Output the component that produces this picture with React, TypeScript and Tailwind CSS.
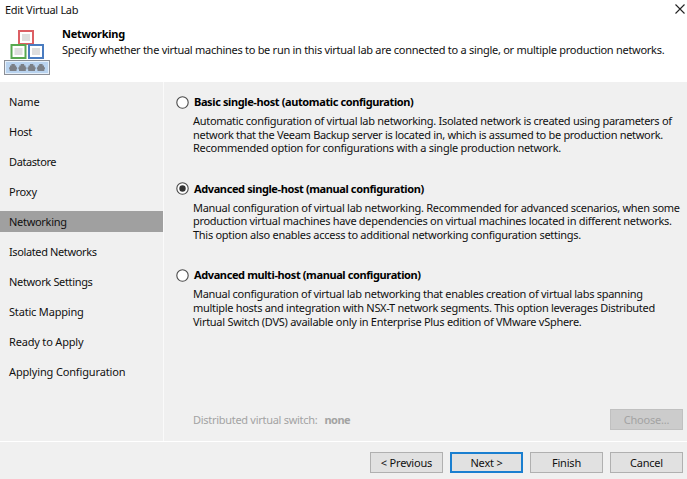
import clsx from "clsx";
import { useState } from "react";

const steps = [
  { label: "Name", tracking: "tracking-[-0.1px]" },
  { label: "Host", tracking: "tracking-[-0.25px]" },
  { label: "Datastore", tracking: "tracking-[-0.4px]" },
  { label: "Proxy", tracking: "tracking-[-0.2px]" },
  { label: "Networking", tracking: "tracking-[-0.3px]" },
  { label: "Isolated Networks", tracking: "tracking-[-0.38px]" },
  { label: "Network Settings", tracking: "tracking-[-0.34px]" },
  { label: "Static Mapping", tracking: "tracking-[-0.18px]" },
  { label: "Ready to Apply", tracking: "tracking-[-0.18px]" },
  { label: "Applying Configuration", tracking: "tracking-[-0.15px]" },
];

const options = [
  {
    title: "Basic single-host (automatic configuration)",
    lines: [
      { text: "Automatic configuration of virtual lab networking. Isolated network is created using parameters of", tracking: "tracking-[-0.3px]" },
      { text: "network that the Veeam Backup server is located in, which is assumed to be production network.", tracking: "tracking-[-0.31px]" },
      { text: "Recommended option for configurations with a single production network.", tracking: "tracking-[-0.26px]" },
    ],
  },
  {
    title: "Advanced single-host (manual configuration)",
    lines: [
      { text: "Manual configuration of virtual lab networking. Recommended for advanced scenarios, when some", tracking: "tracking-[-0.28px]" },
      { text: "production virtual machines have dependencies on virtual machines located in different networks.", tracking: "tracking-[-0.29px]" },
      { text: "This option also enables access to additional networking configuration settings.", tracking: "tracking-[-0.28px]" },
    ],
  },
  {
    title: "Advanced multi-host (manual configuration)",
    lines: [
      { text: "Manual configuration of virtual lab networking that enables creation of virtual labs spanning", tracking: "tracking-[-0.29px]" },
      { text: "multiple hosts and integration with NSX-T network segments. This option leverages Distributed", tracking: "tracking-[-0.3px]" },
      { text: "Virtual Switch (DVS) available only in Enterprise Plus edition of VMware vSphere.", tracking: "tracking-[-0.28px]" },
    ],
  },
];

function LabIcon() {
  return (
    <svg width="48" height="48" viewBox="0 0 48 48" fill="none">
      <rect x="15" y="2" width="14" height="13" fill="#fff" stroke="#dc5f64" strokeWidth="2" />
      <rect x="18" y="5" width="8" height="7" fill="#dedede" />
      <rect x="7.5" y="16" width="14" height="13" fill="#fff" stroke="#58a850" strokeWidth="2" />
      <rect x="10.5" y="19" width="8" height="7" fill="#dedede" />
      <rect x="25" y="16" width="14" height="13" fill="#fff" stroke="#4a7cc0" strokeWidth="2" />
      <rect x="28" y="19" width="8" height="7" fill="#dedede" />
      <rect x="0.5" y="31.5" width="45" height="14" fill="#e6f0fa" stroke="#8c8f96" />
      <rect x="2" y="33" width="42" height="11" fill="#b9d3ef" />
      {[5.2, 14.5, 23.7, 33].map((x) => (
        <path
          key={x}
          transform={`translate(${x} 35)`}
          d="M2.2 0h3.4v1.6h1.4v1.6h.9v2h-.6v1.8H.5V5.2H-.1v-2h.9V1.6h1.4z"
          fill="#7b7f86"
        />
      ))}
    </svg>
  );
}

function Radio({ checked }: { checked: boolean }) {
  return (
    <svg width="13" height="13" viewBox="0 0 13 13" className="shrink-0">
      <circle cx="6.5" cy="6.5" r="5.7" fill="#fff" stroke="#4a4a4a" strokeWidth="1.1" />
      {checked && <circle cx="6.5" cy="6.5" r="3.2" fill="#333" />}
    </svg>
  );
}

function Button({
  label,
  primary,
  disabled,
}: {
  label: string;
  primary?: boolean;
  disabled?: boolean;
}) {
  return (
    <button
      disabled={disabled}
      className={clsx(
        "h-[21px] w-[73px] flex items-center justify-center tracking-[-0.2px]",
        disabled
          ? "bg-[#cccccc] border border-[#c0c0c0] text-[#a3a3a3]"
          : primary
            ? "bg-[#e1e1e1] border-2 border-[#1a7fd0]"
            : "bg-[#e1e1e1] border border-[#b0b0b0]"
      )}
    >
      {label}
    </button>
  );
}

export default function App() {
  const [step, setStep] = useState(4);
  const [selected, setSelected] = useState(1);

  return (
    <div className="w-[687px] h-[479px] overflow-hidden flex flex-col bg-[#f0f0f0] text-[#111] text-[11px] leading-[14px] tracking-[-0.29px] whitespace-nowrap font-['Noto_Sans','Open_Sans',sans-serif]">
      <header className="h-[82px] bg-white shrink-0">
        <div className="flex justify-between pt-[3px] pl-[5px] pr-[2px] h-[28px]">
          <span>Edit Virtual Lab</span>
          <svg width="10" height="10" viewBox="0 0 10 10" className="mt-px" stroke="#222" strokeWidth="1.1">
            <path d="M0.5 0.5l9 9M9.5 0.5l-9 9" />
          </svg>
        </div>
        <div className="flex pl-1">
          <div className="w-[58px] pt-px shrink-0">
            <LabIcon />
          </div>
          <div className="-mt-[1px]">
            <h1 className="font-bold text-black">Networking</h1>
            <p className="mt-[2px] tracking-[-0.28px]">
              Specify whether the virtual machines to be run in this virtual lab are connected to a single, or multiple production networks.
            </p>
          </div>
        </div>
      </header>

      <main className="flex h-[360px] shrink-0 border-b border-white">
        <nav className="w-[164px] shrink-0 pt-[9px] border-r border-[#fafafa] flex flex-col gap-[9.1px]">
          {steps.map((item, i) => (
            <div
              key={item.label}
              onClick={() => setStep(i)}
              className={clsx("h-[21px] pl-[9px] flex items-center shrink-0", i === step && "bg-[#a0a0a0]")}
            >
              <span className={item.tracking}>{item.label}</span>
            </div>
          ))}
        </nav>

        <section className="flex-1 min-w-0 flex flex-col pl-[12px] pr-[4px] pt-[13px]">
          {options.map((option, i) => (
            <div key={option.title} onClick={() => setSelected(i)} className="h-[86.7px] shrink-0">
              <div className="flex items-center gap-[5px]">
                <Radio checked={i === selected} />
                <span className="font-bold text-black tracking-[-0.39px]">{option.title}</span>
              </div>
              <div className="pl-[17px] pt-[5px] leading-[13.7px]">
                {option.lines.map((line) => (
                  <div key={line.text} className={line.tracking}>
                    {line.text}
                  </div>
                ))}
              </div>
            </div>
          ))}

          <div className="flex items-center justify-between pl-[17px] mt-[54px] text-[#a3a3a3]">
            <div className="flex gap-[7px]">
              <span>Distributed virtual switch:</span>
              <span className="font-bold tracking-[-0.5px]">none</span>
            </div>
            <Button label="Choose..." disabled />
          </div>
        </section>
      </main>

      <footer className="flex justify-end gap-[7px] pt-[10px] pr-[4px]">
        <Button label="< Previous" />
        <Button label="Next >" primary />
        <Button label="Finish" />
        <Button label="Cancel" />
      </footer>
    </div>
  );
}
